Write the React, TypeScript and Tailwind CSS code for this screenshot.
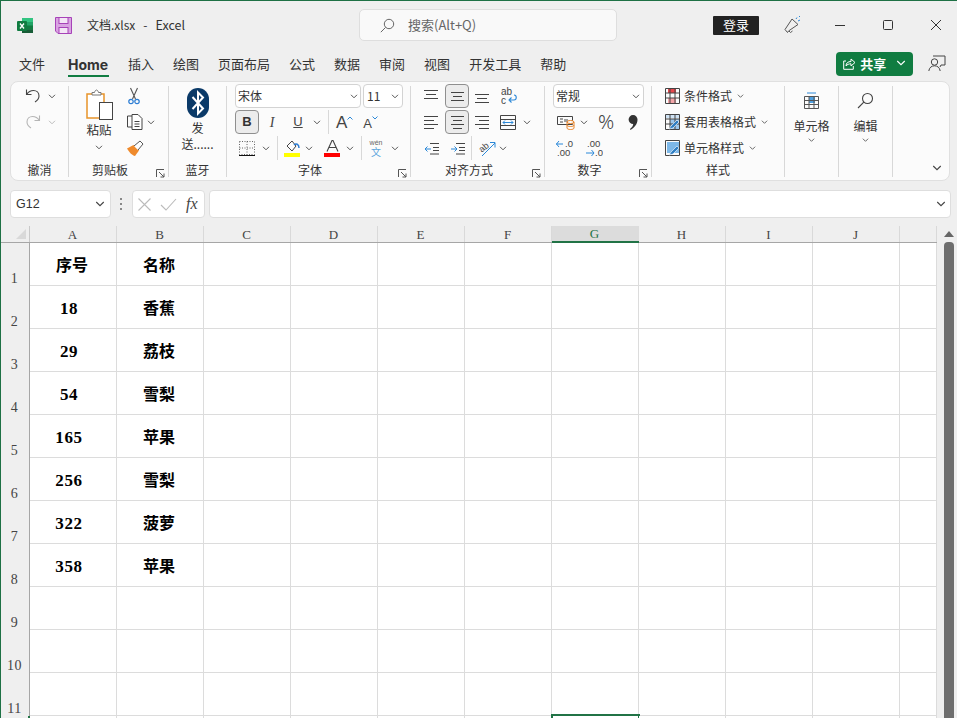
import React from "react";

const UI = "font-['Noto_Sans_CJK_SC','Noto_Sans',sans-serif]";

const Chev = ({ c = "#444", w = 8, className = "" }: { c?: string; w?: number; className?: string }) => (
  <svg width={w} height={w * 0.625} viewBox="0 0 8 5" className={"shrink-0 " + className} fill="none" stroke={c} strokeWidth="0.9">
    <path d="M1 .8 4 3.800 7 .8" />
  </svg>
);

const Launcher = () => (
  <svg width="9" height="9" viewBox="0 0 9 9" fill="none" stroke="#555" strokeWidth="1">
    <path d="M.5 8V.5H8M3 3l5 5M8 4.500V8H4.500" />
  </svg>
);

const Lines = ({ l }: { l: [number, number, number][] }) => (
  <svg width="15" height="15" viewBox="0 0 15 15" stroke="#444" strokeWidth="1" className="shrink-0 block">
    {l.map(([x1, x2, y], i) => (
      <line key={i} x1={x1} x2={x2} y1={y + 0.5} y2={y + 0.5} />
    ))}
  </svg>
);

const Boxed = ({ children }: { children: React.ReactNode }) => (
  <div className="w-[24px] h-[24px] rounded-[4px] border border-[#8f8f8f] bg-[#ececec] flex items-center justify-center shrink-0">
    {children}
  </div>
);

const Divider = () => <div className="w-px h-[91px] bg-[#d8d8d8] self-start mt-[3px] shrink-0" />;
const VBar = ({ className }: { className: string }) => <div className={"w-px h-[24px] bg-[#d8d8d8] shrink-0 " + className} />;
const Row = ({ children }: { children: React.ReactNode }) => <div className="flex items-center h-[26px]">{children}</div>;

const Group = ({ w, label, launcher, children }: { w: string; label: string; launcher?: boolean; children: React.ReactNode }) => (
  <div className={"relative shrink-0 flex flex-col " + w}>
    <div className="h-[78px]">{children}</div>
    <div className={"h-[18px] flex items-center justify-center text-[12px] leading-none text-[#333] " + (launcher ? "pr-[17px]" : "")}>{label}</div>
    {launcher && (
      <div className="absolute right-[3px] bottom-[2px] flex">
        <Launcher />
      </div>
    )}
  </div>
);

const GridIcon = ({ kind }: { kind: "cond" | "table" | "cell" }) => (
  <svg width="18" height="18" viewBox="0 0 18 18" fill="none" className="shrink-0">
    {kind === "cond" && (
      <>
        <rect x="4" y="1" width="8" height="5" fill="#e8474c" />
        <rect x="4" y="11" width="8" height="5" fill="#f4a5a8" />
      </>
    )}
    {kind === "table" && <rect x="1" y="1" width="15" height="4" fill="#cfe3f5" />}
    {kind === "table" && <rect x="6" y="6" width="10" height="10" fill="#9cc8ee" />}
    {kind === "cell" && <rect x="3" y="3" width="13" height="11" fill="#7db8e8" />}
    <path
      d={kind === "cell" ? "M1.500 1.500h14v15h-14z" : "M1.500 1.500h14v15h-14zM1.500 6h14M1.500 11h14M6 1.500v15M11 1.500v15"}
      stroke="#444"
      strokeWidth="1"
    />
    {kind !== "cond" && <path d="M5 16l2-3 6-6 2 2-6 6z" fill="#2f7fc4" stroke="#fff" strokeWidth=".6" />}
  </svg>
);

const Cell = ({ children, num }: { children?: React.ReactNode; num?: boolean }) => (
  <div className="bg-white border-r border-b border-[#dcdcdc] flex items-center justify-center text-black font-bold">
    {num ? (
      <span className="pr-[8px] pt-[3px] font-['Liberation_Serif',serif] text-[17px] tracking-[0.6px]">{children}</span>
    ) : (
      <span className="text-[16px] leading-none pr-[2px] pb-[1px]">{children}</span>
    )}
  </div>
);

const data: [string, string][] = [
  ["序号", "名称"],
  ["18", "香蕉"],
  ["29", "荔枝"],
  ["54", "雪梨"],
  ["165", "苹果"],
  ["256", "雪梨"],
  ["322", "菠萝"],
  ["358", "苹果"],
  ["", ""],
  ["", ""],
  ["", ""],
];
const cols = ["A", "B", "C", "D", "E", "F", "G", "H", "I", "J", ""];
const tabs = ["插入", "绘图", "页面布局", "公式", "数据", "审阅", "视图", "开发工具", "帮助"];

export default function App() {
  return (
    <div className={"w-[957px] h-[718px] overflow-hidden bg-[#efefef] border-t border-l border-[#1e7145] flex flex-col text-[#333] " + UI}>
      {/* title bar */}
      <div className="h-[43px] shrink-0 flex items-center pt-[5px]">
        <svg width="17" height="17" viewBox="0 0 17 17" className="ml-[16px] shrink-0">
          <rect x="5" y="1" width="11" height="15" rx="1" fill="#21a366" />
          <rect x="5" y="1" width="11" height="4" fill="#33c481" />
          <rect x="5" y="8.500" width="11" height="4" fill="#107c41" />
          <rect x="5" y="12.500" width="11" height="3.500" fill="#185c37" />
          <rect x="0" y="4" width="10" height="10" rx="1" fill="#107c41" />
          <path d="M3 6.500l4 5M7 6.500l-4 5" stroke="#fff" strokeWidth="1.300" />
        </svg>
        <svg width="17" height="17" viewBox="0 0 17 17" fill="none" className="ml-[21px] shrink-0">
          <path d="M.5.500h16v16H3L.5 14z" fill="#d9a3e2" stroke="#a743b8" />
          <rect x="4" y=".5" width="9" height="6" fill="#f4e6f6" stroke="#a743b8" />
          <rect x="4" y="10.500" width="9" height="6" fill="#f4e6f6" stroke="#a743b8" />
        </svg>
        <div className="ml-[15px] w-[272px] shrink-0 flex items-center text-[12px] text-[#333]">
          <span>文档.xlsx</span>
          <span className="ml-[8px]">-</span>
          <span className="ml-[8px] text-[12.500px]">Excel</span>
        </div>
        <div className="w-[258px] h-[32px] rounded-[5px] bg-[#f9f9f9] border border-[#dedede] flex items-center shrink-0">
          <svg width="15" height="15" viewBox="0 0 15 15" fill="none" stroke="#666" strokeWidth="1" className="ml-[20px]">
            <circle cx="9" cy="6" r="4.700" />
            <path d="M5.600 9.400.8 14.200" />
          </svg>
          <span className="ml-[13px] text-[13px] text-[#666]">搜索(Alt+Q)</span>
        </div>
        <div className="ml-[96px] w-[46px] h-[19px] bg-[#222] rounded-[1px] text-white text-[13px] flex items-center justify-center shrink-0">登录</div>
        <svg width="18" height="18" viewBox="0 0 18 18" fill="none" className="ml-[25px] shrink-0">
          <path d="M1 13.500 8 3l6 5.500-9.500 6.500-1 1.500z" stroke="#555" strokeWidth="1" />
          <path d="M5 15l1.500 1.500 2-1.500" stroke="#555" strokeWidth="1" />
          <path d="M12 3l1-1.500M14 5l2-1M15 1l1-1" stroke="#2b88d8" strokeWidth="1" />
        </svg>
        <svg width="12" height="12" viewBox="0 0 12 12" stroke="#333" className="ml-[32px] shrink-0">
          <path d="M1 6.500h10" />
        </svg>
        <svg width="12" height="12" viewBox="0 0 12 12" fill="none" stroke="#333" className="ml-[36px] shrink-0">
          <rect x="1.500" y="1.500" width="9" height="9" rx="1" />
        </svg>
        <svg width="12" height="12" viewBox="0 0 12 12" fill="none" stroke="#333" className="ml-[36px] shrink-0">
          <path d="M1 1l10 10M11 1 1 11" />
        </svg>
      </div>

      {/* tabs */}
      <div className="h-[34px] shrink-0 flex items-center text-[13px] text-[#333] pt-[5px]">
        <span className="ml-[18px]">文件</span>
        <div className="ml-[23px] h-full relative flex items-center">
          <span className="font-['Inter',sans-serif] font-bold text-[14px] w-[41px] pt-[2px]">Home</span>
          <div className="absolute left-0 bottom-[1px] w-[41px] h-[2px] bg-[#107c41]" />
        </div>
        {tabs.map((t, i) => (
          <span key={i} className="ml-[19px] shrink-0">{t}</span>
        ))}
        <div className="ml-[270px] w-[77px] h-[24px] rounded-[4px] bg-[#107c41] text-white flex items-center shrink-0">
          <svg width="13" height="13" viewBox="0 0 13 13" fill="none" stroke="#fff" strokeWidth="1" className="ml-[7px]">
            <path d="M3 4H.7v8.300h9.600V9M3 9c0-3 2-4.500 5-4.500V2l4 3.500-4 3.500V6.800C6 6.800 4 7.500 3 9z" />
          </svg>
          <span className="ml-[4px] font-bold text-[13px]">共享</span>
          <Chev c="#fff" w={10} className="ml-[10px]" />
        </div>
        <svg width="18" height="17" viewBox="0 0 18 17" fill="none" stroke="#444" strokeWidth="1" className="ml-[15px] shrink-0">
          <circle cx="6.500" cy="7" r="3.200" />
          <path d="M.8 16c.5-3.500 2.800-5.200 5.700-5.200s5.200 1.700 5.700 5.200M5 1h12v9h-4l-1 2" />
        </svg>
      </div>

      {/* ribbon */}
      <div className="mt-[3px] ml-[9px] w-[940px] h-[100px] shrink-0 rounded-[8px] bg-[#fbfbfb] border border-[#e0e0e0] flex pt-px">
        <Group w="w-[57px]" label="撤消">
          <Row>
            <svg width="16" height="16" viewBox="0 0 16 16" fill="none" stroke="#444" strokeWidth="1.100" className="ml-[14px]">
              <path d="M1.500 1.500v5h5M1.800 6.300C3.500 3.500 6 2.500 8.500 2.500c3 0 5.500 2.200 5.500 5.500 0 2.500-1.500 4.500-4 6" />
            </svg>
            <Chev className="ml-[7px]" />
          </Row>
          <Row>
            <svg width="16" height="16" viewBox="0 0 16 16" fill="none" stroke="#b5b5b5" strokeWidth="1.100" className="ml-[14px]">
              <path d="M14.500 1.500v5h-5M14.200 6.300C12.500 3.500 10 2.500 7.500 2.500c-3 0-5.500 2.200-5.500 5.500 0 2.500 1.500 4.500 4 6" />
            </svg>
            <Chev c="#b5b5b5" className="ml-[7px]" />
          </Row>
        </Group>
        <Divider />
        <Group w="w-[99px]" label="剪贴板" launcher>
          <div className="flex">
            <div className="ml-[3px] w-[54px] flex flex-col items-center pt-[6px]">
              <svg width="28" height="32" viewBox="0 0 28 32" fill="none" className="shrink-0">
                <path d="M2 5h17v24H2z" fill="#fff" stroke="#e8942a" strokeWidth="1.500" />
                <path d="M7 6V3.500h2.500C10 1.500 11 1 11.500 1s1.500.5 2 2.500H16V6z" fill="#fff" stroke="#777" />
                <rect x="14.500" y="13.500" width="13" height="17" fill="#fff" stroke="#444" />
              </svg>
              <span className="text-[12.500px] leading-[16px] mt-[1px]">粘贴</span>
              <Chev className="mt-[7px]" />
            </div>
            <div className="flex flex-col">
              <Row>
                <svg width="12" height="18" viewBox="0 0 12 18" fill="none" className="ml-[2px]">
                  <path d="M2.500 1l5 11M9.500 1l-5 11" stroke="#555" strokeWidth="1.100" />
                  <circle cx="3" cy="14.500" r="2.200" stroke="#2b7cd3" strokeWidth="1.200" />
                  <circle cx="9" cy="14.500" r="2.200" stroke="#2b7cd3" strokeWidth="1.200" />
                </svg>
              </Row>
              <Row>
                <svg width="18" height="18" viewBox="0 0 18 18" fill="none" stroke="#444" strokeWidth="1">
                  <path d="M6 3H1.500v11H6" />
                  <path d="M6 1.500h6l4 4v11H6z" fill="#fff" />
                  <path d="M8.500 8.500h5M8.500 11h5M8.500 13.500h5" />
                </svg>
                <Chev className="ml-[3px]" />
              </Row>
              <Row>
                <svg width="18" height="17" viewBox="0 0 18 17" fill="none">
                  <path d="M1 8.500 7.500 5 13 10.500 9 16C6 15.500 3 12 1 8.500z" fill="#ef8a2c" />
                  <path d="M8 6l6-5 3 3-5 6" fill="#fff" stroke="#555" />
                </svg>
              </Row>
            </div>
          </div>
        </Group>
        <Divider />
        <Group w="w-[57px]" label="蓝牙">
          <div className="flex flex-col items-center pt-[5px]">
            <svg width="22" height="30" viewBox="0 0 22 30" fill="none" className="shrink-0">
              <rect width="22" height="30" rx="11" fill="#0b3a68" />
              <path d="M5.500 9 16 20.500 11 25.500V4.500L16 9.500 5.500 21" stroke="#fff" strokeWidth="2" />
            </svg>
            <span className="text-[12px] leading-[16px] mt-[2px]">发</span>
            <span className="text-[12px] leading-[16px] whitespace-nowrap">送......</span>
          </div>
        </Group>
        <Divider />
        <Group w="w-[183px]" label="字体" launcher>
          <Row>
            <div className="ml-[8px] w-[126px] h-[24px] bg-white border border-[#d3d3d3] rounded-[4px] flex items-center justify-between px-[2px] text-[12px] shrink-0">
              <span>宋体</span>
              <Chev />
            </div>
            <div className="ml-[2px] w-[40px] h-[24px] bg-white border border-[#d3d3d3] rounded-[4px] flex items-center justify-between px-[3px] text-[12px] shrink-0">
              <span>11</span>
              <Chev />
            </div>
          </Row>
          <Row>
            <div className="ml-[8px]">
              <Boxed>
                <span className="font-['Liberation_Sans',sans-serif] font-bold text-[13px] text-[#333]">B</span>
              </Boxed>
            </div>
            <span className="ml-[8px] w-[10px] font-['Liberation_Serif',serif] italic text-[14px] text-[#444] text-center">I</span>
            <span className="ml-[15px] w-[12px] font-['Liberation_Sans',sans-serif] underline text-[13px] text-[#444] text-center">U</span>
            <Chev className="ml-[9px]" />
            <VBar className="ml-[7px]" />
            <span className="ml-[7px] font-['Liberation_Sans',sans-serif] text-[17px] leading-none text-[#444]">A</span>
            <svg width="6" height="4" viewBox="0 0 6 4" fill="none" stroke="#2b88d8" className="mb-[8px]"><path d="M.5 3.500 3 1l2.500 2.500" /></svg>
            <span className="ml-[10px] font-['Liberation_Sans',sans-serif] text-[13px] leading-none text-[#444] mt-[2px]">A</span>
            <svg width="6" height="4" viewBox="0 0 6 4" fill="none" stroke="#2b88d8" className="mb-[8px]"><path d="M.5.500 3 3 5.500.500" /></svg>
          </Row>
          <Row>
            <svg width="16" height="15" viewBox="0 0 16 15" fill="none" stroke="#666" className="ml-[12px] shrink-0">
              <path d="M.5.500h15v13H.5zM8 .5v13M.5 7h15" strokeDasharray="1 1.500" />
              <path d="M0 14.500h16" stroke="#111" />
            </svg>
            <Chev className="ml-[7px]" />
            <VBar className="ml-[7px]" />
            <svg width="17" height="18" viewBox="0 0 17 18" fill="none" className="ml-[6px] shrink-0">
              <path d="M3 7 8 2l4 5-4 5z" stroke="#444" fill="#fff" />
              <path d="M10 6c2-2 5-1 5 3" stroke="#2b7cd3" strokeWidth="1.500" />
              <rect y="14" width="16" height="4" fill="#ffff00" />
            </svg>
            <Chev className="ml-[4px]" />
            <svg width="17" height="18" viewBox="0 0 17 18" fill="none" className="ml-[11px] shrink-0">
              <path d="M3 12.500 8 1.500h1l5 11M5 8.500h7" stroke="#444" strokeWidth="1.100" />
              <rect y="14" width="16" height="4" fill="#ff0000" />
            </svg>
            <Chev className="ml-[5px]" />
            <VBar className="ml-[7px]" />
            <div className="ml-[7px] flex flex-col items-center w-[14px] leading-none shrink-0">
              <span className="text-[7px] leading-[8px] font-['Liberation_Sans',sans-serif] text-[#666]">wén</span>
              <span className="text-[10px] leading-[10px] text-[#5aa5dd]">文</span>
            </div>
            <Chev className="ml-[8px]" />
          </Row>
        </Group>
        <Divider />
        <Group w="w-[133px]" label="对齐方式" launcher>
          <Row>
            <div className="ml-[13px]"><Lines l={[[0, 14, 1], [2, 12, 5], [0, 14, 9]]} /></div>
            <div className="ml-[6px]"><Boxed><Lines l={[[1, 14, 3], [3, 12, 7], [1, 14, 11]]} /></Boxed></div>
            <div className="ml-[6px]"><Lines l={[[0, 14, 5], [2, 12, 9], [0, 14, 13]]} /></div>
            <svg width="18" height="19" viewBox="0 0 18 19" fill="none" className="ml-[11px] shrink-0">
              <text x="0" y="8" fontSize="10" fill="#444" fontFamily="Liberation Sans">ab</text>
              <text x="0" y="17" fontSize="10" fill="#444" fontFamily="Liberation Sans">c</text>
              <path d="M9 13h4c3 0 3-5 0-5M10.500 10.500 8 13l2.500 2.500" stroke="#2b88d8" strokeWidth="1.100" />
            </svg>
          </Row>
          <Row>
            <div className="ml-[13px]"><Lines l={[[0, 14, 1], [0, 10, 5], [0, 14, 9], [0, 10, 13]]} /></div>
            <div className="ml-[6px]"><Boxed><Lines l={[[1, 14, 1], [3, 12, 5], [1, 14, 9], [3, 12, 13]]} /></Boxed></div>
            <div className="ml-[6px]"><Lines l={[[0, 14, 1], [4, 14, 5], [0, 14, 9], [4, 14, 13]]} /></div>
            <svg width="16" height="15" viewBox="0 0 16 15" fill="none" className="ml-[10px] shrink-0">
              <path d="M.5.500h15v14H.5zM.5 4.500h15M.5 10.500h15" stroke="#444" />
              <path d="M3 7.500h10M5 5.500l-2 2 2 2M11 5.500l2 2-2 2" stroke="#2b88d8" />
            </svg>
            <Chev className="ml-[7px]" />
          </Row>
          <Row>
            <svg width="15" height="13" viewBox="0 0 15 13" fill="none" className="ml-[13px] shrink-0">
              <path d="M6 1.500h9M9 5.500h6M9 8.500h6M6 12h9" stroke="#444" />
              <path d="M1 7h6M3.500 4.500 1 7l2.500 2.500" stroke="#2b88d8" />
            </svg>
            <svg width="15" height="13" viewBox="0 0 15 13" fill="none" className="ml-[11px] shrink-0">
              <path d="M6 1.500h9M9 5.500h6M9 8.500h6M6 12h9" stroke="#444" />
              <path d="M1 7h6M4.500 4.500 7 7 4.500 9.500" stroke="#2b88d8" />
            </svg>
            <VBar className="ml-[6px]" />
            <svg width="18" height="17" viewBox="0 0 18 17" fill="none" className="ml-[6px] shrink-0 overflow-visible">
              <text x="1" y="11" fontSize="9" fill="#444" fontFamily="Liberation Sans" transform="rotate(-40 5 8)">ab</text>
              <path d="M4 16 17 3M12 2.500h5v5" stroke="#2b88d8" />
            </svg>
            <Chev className="ml-[3px]" />
          </Row>
        </Group>
        <Divider />
        <Group w="w-[106px]" label="数字" launcher>
          <Row>
            <div className="ml-[8px] w-[91px] h-[24px] bg-white border border-[#d3d3d3] rounded-[4px] flex items-center justify-between px-[2px] pr-[3px] text-[12px] shrink-0">
              <span>常规</span>
              <Chev />
            </div>
          </Row>
          <Row>
            <svg width="18" height="16" viewBox="0 0 18 16" fill="none" className="ml-[12px] shrink-0">
              <path d="M.5 2.500h15v8H.5z" stroke="#444" />
              <path d="M3 5h3M3 8h3M8 5v3M10 5v3" stroke="#444" />
              <ellipse cx="13.500" cy="8" rx="3.500" ry="1.500" fill="#fff" stroke="#e8842a" />
              <path d="M10 8v6c0 2 7 2 7 0V8M10 11c0 2 7 2 7 0" stroke="#e8842a" />
            </svg>
            <Chev className="ml-[5px]" />
            <span className="ml-[10px] font-['Noto_Sans',sans-serif] font-light text-[20px] leading-none text-[#444] w-[18px]">%</span>
            <svg width="10" height="15" viewBox="0 0 10 15" className="ml-[12px] shrink-0">
              <path d="M5 0a4.500 4.500 0 0 1 4.500 4.800C9.500 9 6.500 12.500 2.500 15L2 14c2-1.500 3-3 3.200-5A4.500 4.500 0 0 1 5 0z" fill="#333" />
            </svg>
          </Row>
          <Row>
            <svg width="18" height="18" viewBox="0 0 18 18" fill="none" className="ml-[11px] shrink-0">
              <text x="9" y="8" fontSize="9.500" fill="#444" fontFamily="Liberation Sans">.0</text>
              <text x="1" y="17" fontSize="9.500" fill="#444" fontFamily="Liberation Sans">.00</text>
              <path d="M0 5h7M3 2 .5 5 3 8" stroke="#2b88d8" />
            </svg>
            <svg width="18" height="18" viewBox="0 0 18 18" fill="none" className="ml-[11px] shrink-0">
              <text x="2" y="8" fontSize="9.500" fill="#444" fontFamily="Liberation Sans">.00</text>
              <text x="10" y="17" fontSize="9.500" fill="#444" fontFamily="Liberation Sans">.0</text>
              <path d="M1 14h8M6.500 11l2.500 3-2.500 3" stroke="#2b88d8" />
            </svg>
          </Row>
        </Group>
        <Divider />
        <Group w="w-[132px]" label="样式">
          {([["cond", "条件格式"], ["table", "套用表格格式"], ["cell", "单元格样式"]] as const).map(([k, t]) => (
            <Row key={k}>
              <div className="ml-[12px] flex"><GridIcon kind={k} /></div>
              <span className="ml-[2px] text-[12px] whitespace-nowrap">{t}</span>
              <Chev className="ml-[5px]" w={7} />
            </Row>
          ))}
        </Group>
        <Divider />
        <Group w="w-[53px]" label="">
          <div className="flex flex-col items-center pt-[9px]">
            <svg width="17" height="17" viewBox="0 0 17 17" fill="none" className="shrink-0">
              <rect x="6" y="5" width="6" height="6" fill="#4d9fe0" />
              <path d="M1.500 4.500h14v12h-14zM1.500 8.500h14M1.500 12.500h14M6 4.500v12M11 4.500v12" stroke="#555" />
              <path d="M4 1h9" stroke="#2b88d8" />
            </svg>
            <span className="text-[12px] leading-[16px] mt-[9px] whitespace-nowrap">单元格</span>
            <Chev className="mt-[4px]" w={7} />
          </div>
        </Group>
        <Divider />
        <Group w="w-[53px]" label="">
          <div className="flex flex-col items-center pt-[9px]">
            <svg width="17" height="17" viewBox="0 0 17 17" fill="none" stroke="#444" strokeWidth="1.100" className="shrink-0">
              <circle cx="10.500" cy="6.500" r="5" />
              <path d="M6.800 10.200 1 16" />
            </svg>
            <span className="text-[12px] leading-[16px] mt-[9px] whitespace-nowrap">编辑</span>
            <Chev className="mt-[4px]" w={7} />
          </div>
        </Group>
        <Divider />
        <div className="flex-1 flex items-end justify-end pr-[7px] pb-[9px]">
          <Chev w={10} />
        </div>
      </div>

      {/* formula bar */}
      <div className="mt-[9px] h-[28px] shrink-0 flex items-center">
        <div className="ml-[9px] w-[101px] h-full bg-white border border-[#dedede] rounded-[4px] flex items-center justify-between pl-[5px] pr-[5px] shrink-0">
          <span className="font-['Liberation_Sans',sans-serif] text-[12.500px] text-[#333]">G12</span>
          <Chev w={10} />
        </div>
        <div className="ml-[9px] flex flex-col gap-[3px] shrink-0">
          <div className="w-[2px] h-[2px] bg-[#888]" />
          <div className="w-[2px] h-[2px] bg-[#888]" />
          <div className="w-[2px] h-[2px] bg-[#888]" />
        </div>
        <div className="ml-[10px] w-[73px] h-full bg-white border border-[#dedede] rounded-[4px] flex items-center shrink-0">
          <svg width="13" height="13" viewBox="0 0 13 13" fill="none" stroke="#bbb" strokeWidth="1.100" className="ml-[5px]">
            <path d="M.5.500l12 12M12.500.500l-12 12" />
          </svg>
          <svg width="17" height="13" viewBox="0 0 17 13" fill="none" stroke="#bbb" strokeWidth="1.100" className="ml-[9px]">
            <path d="M1 7l5 5L16 1" />
          </svg>
          <span className="ml-[9px] font-['Liberation_Serif',serif] italic text-[16px] text-[#444] leading-none">fx</span>
        </div>
        <div className="ml-[4px] w-[742px] h-full bg-white border border-[#dedede] rounded-[4px] flex items-center justify-end pr-[4px] shrink-0">
          <Chev w={10} />
        </div>
      </div>

      {/* sheet */}
      <div className="mt-[8px] flex-1 flex min-h-0">
        <div className="w-[936px] shrink-0 flex flex-col">
          <div className="h-[17px] shrink-0 grid grid-cols-[29px_repeat(10,87px)_37px] border-b border-[#a6a6a6] font-['Liberation_Serif',serif] text-[13px] leading-none text-[#444]">
            <div className="border-r border-[#c9c9c9] flex justify-end items-end pr-[3px] pb-[3px]">
              <svg width="10" height="10" viewBox="0 0 10 10"><path d="M10 0v10H0z" fill="#d9d9d9" /></svg>
            </div>
            {cols.map((c, i) =>
              c === "G" ? (
                <div key={i} className="bg-[#dcdcdc] border-b-2 border-[#217346] mb-[-1px] text-[#217346] flex items-center justify-center pr-[2px]">{c}</div>
              ) : (
                <div key={i} className="border-r border-[#d9d9d9] flex items-center justify-center pr-px">{c}</div>
              )
            )}
          </div>
          <div className="grid grid-cols-[29px_repeat(10,87px)_37px] auto-rows-[43px] shrink-0">
            {data.map((row, r) => (
              <React.Fragment key={r}>
                <div className="border-r border-[#a6a6a6] flex items-end justify-center pr-px font-['Liberation_Serif',serif] text-[14px] tracking-[0.5px] leading-[14px] text-[#444]">{r + 1}</div>
                {cols.map((_, c) => (
                  <Cell key={c} num={c === 0 && r > 0 && r < 8}>
                    {c < 2 ? row[c] : ""}
                  </Cell>
                ))}
              </React.Fragment>
            ))}
            <div className="border-r-2 border-[#217346]" />
            {cols.map((c, i) => (
              <div key={i} className={c === "G" ? "bg-white border-t-2 border-x-2 border-[#217346] mt-[-2px] mx-[-1px]" : "bg-white border-r border-[#dcdcdc]"} />
            ))}
          </div>
        </div>
        <div className="flex-1 flex flex-col pl-[7px]">
          <svg width="10" height="6" viewBox="0 0 10 6" className="mt-[5px] shrink-0"><path d="M5 0l5 6H0z" fill="#666" /></svg>
          <div className="mt-[5px] w-[10px] flex-1 bg-[#6e6e6e] rounded-t-[4px]" />
        </div>
      </div>
    </div>
  );
}
